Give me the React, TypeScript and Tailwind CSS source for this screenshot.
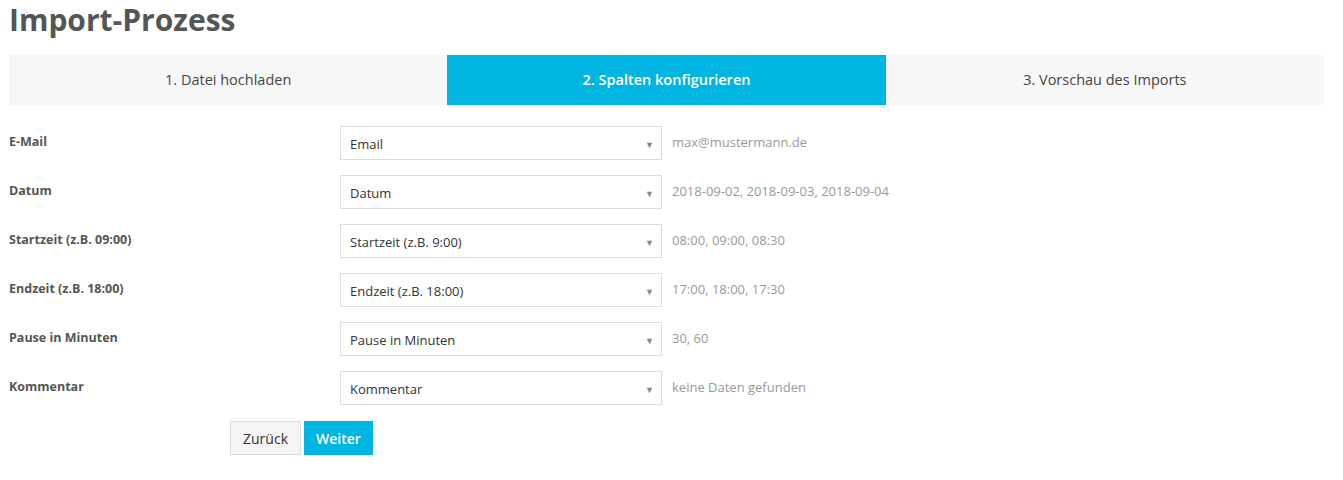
const rows = [
  { label: 'E-Mail', value: 'Email', hint: 'max@mustermann.de' },
  { label: 'Datum', value: 'Datum', hint: '2018-09-02, 2018-09-03, 2018-09-04' },
  { label: 'Startzeit (z.B. 09:00)', value: 'Startzeit (z.B. 9:00)', hint: '08:00, 09:00, 08:30' },
  { label: 'Endzeit (z.B. 18:00)', value: 'Endzeit (z.B. 18:00)', hint: '17:00, 18:00, 17:30' },
  { label: 'Pause in Minuten', value: 'Pause in Minuten', hint: '30, 60' },
  { label: 'Kommentar', value: 'Kommentar', hint: 'keine Daten gefunden' },
];

const steps = ['1. Datei hochladen', '2. Spalten konfigurieren', '3. Vorschau des Imports'];

export default function App() {
  return (
    <main className="min-h-screen bg-white px-[9px] font-['Open_Sans',sans-serif]">
      <div className="w-[1315px]">
        <h1 className="h-[55px] pt-[1px] text-[30px] font-bold leading-[38px] text-[#555]">Import-Prozess</h1>

        {/* Schritte */}
        <div className="grid h-[50px] grid-cols-3">
          {steps.map((step, i) => (
            <div
              key={step}
              className={
                i === 1
                  ? 'flex items-center justify-center bg-[#00b5e2] text-[14.5px] font-semibold text-white'
                  : 'flex items-center justify-center bg-[#f7f7f7] text-[14.5px] text-[#444]'
              }
            >
              {step}
            </div>
          ))}
        </div>

        {/* Spalten */}
        <div className="mt-[21px] flex flex-col gap-[15px]">
          {rows.map((row) => (
            <div key={row.label} className="flex h-[34px]">
              <div className="w-[331px] pt-[7px] text-[12.5px] font-bold leading-[18px] text-[#555]">{row.label}</div>
              <div className="flex h-[34px] w-[322px] items-center justify-between border border-[#ddd] bg-white pl-[9px] pr-[7px] pt-[3px]">
                <span className="text-[13px] text-[#333]">{row.value}</span>
                <span className="text-[9px] leading-none text-[#888]">▼</span>
              </div>
              <div className="pl-[10px] pt-[7px] text-[13px] leading-[18px] text-[#999]">{row.hint}</div>
            </div>
          ))}
        </div>

        <div className="ml-[221px] mt-[16px] flex gap-[3px]">
          <button className="h-[34px] w-[71px] border border-[#ddd] bg-[#f4f4f4] text-[14px] text-[#333]">Zurück</button>
          <button className="h-[34px] w-[69px] bg-[#00b5e2] text-[14px] font-semibold text-white">Weiter</button>
        </div>
      </div>
    </main>
  );
}
